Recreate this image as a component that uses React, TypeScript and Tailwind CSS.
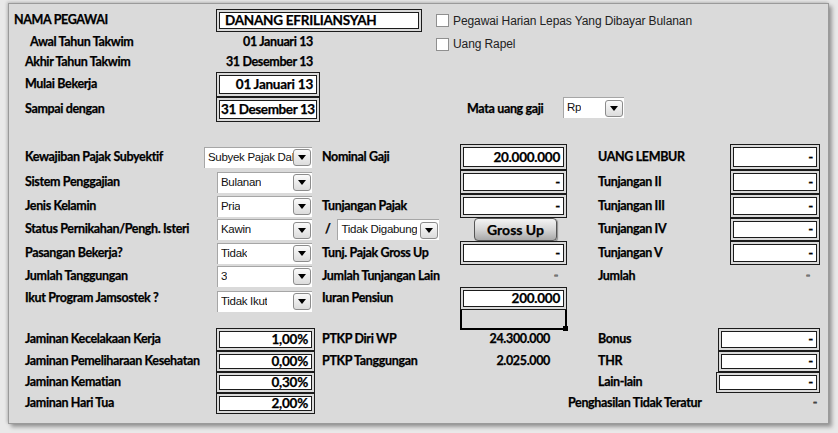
import React from 'react';

// Excel-style form: gaji / pajak pegawai

const Box: React.FC<{ w: number; h?: number; children?: React.ReactNode; left?: boolean }> = ({ w, h, children, left }) => (
  <div
    className={`flex h-full shrink-0 items-center overflow-hidden border-[4px] border-double border-[#1b1b1b] bg-white bg-clip-padding text-[13.5px] ${left ? 'justify-start px-[1px] tracking-[-0.4px]' : 'justify-end px-[3px] tracking-[-0.25px]'}`}
    style={{ width: w, height: h }}
  >
    {children}
  </div>
);

const Arrow: React.FC = () => (
  <div className="flex h-[17px] w-[18px] shrink-0 items-center justify-center rounded-[3px] border border-[#8c8c8c] bg-gradient-to-b from-[#fbfbfb] to-[#dcdcdc]">
    <div className="h-0 w-0 border-x-[4px] border-t-[5px] border-x-transparent border-t-black" />
  </div>
);

const Dropdown: React.FC<{ w: number; text: string; ml?: string }> = ({ w, text, ml = '' }) => (
  <div
    className={`flex h-[21px] shrink-0 items-center justify-between border-l border-t border-[#a6a6a6] bg-white pl-[3px] pr-[1px] ${ml}`}
    style={{ width: w }}
  >
    <span className="min-w-0 overflow-hidden font-['Liberation_Sans',sans-serif] text-[11.5px] font-normal tracking-[-0.3px] text-[#111] [-webkit-text-stroke:0px]">{text}</span>
    <Arrow />
  </div>
);

const Check: React.FC<{ label: string }> = ({ label }) => (
  <div className="flex items-center gap-[4px]">
    <div className="h-[13px] w-[13px] border border-[#8f8f8f] bg-white" />
    <span className="font-['Liberation_Sans',sans-serif] text-[12px] font-normal tracking-[-0.1px] text-[#222] [-webkit-text-stroke:0px]">{label}</span>
  </div>
);

type MidRow = {
  h: number;
  label: string;
  c2?: React.ReactNode;
  c3?: React.ReactNode;
  c4?: React.ReactNode;
  c5?: string;
  c6?: React.ReactNode;
};

export default function App() {
  const mid: MidRow[] = [
    { h: 26, label: 'Kewajiban Pajak Subyektif', c2: <Dropdown w={108} text="Subyek Pajak Dalam Negeri" ml="-ml-[12px]" />, c3: 'Nominal Gaji', c4: <Box w={107}>20.000.000</Box>, c5: 'UANG LEMBUR', c6: <Box w={90}>-</Box> },
    { h: 24, label: 'Sistem Penggajian', c2: <Dropdown w={95} text="Bulanan" ml="ml-[1px]" />, c4: <Box w={107}>-</Box>, c5: 'Tunjangan II', c6: <Box w={90}>-</Box> },
    { h: 24, label: 'Jenis Kelamin', c2: <Dropdown w={95} text="Pria" ml="ml-[1px]" />, c3: 'Tunjangan Pajak', c4: <Box w={107}>-</Box>, c5: 'Tunjangan III', c6: <Box w={90}>-</Box> },
    {
      h: 23,
      label: 'Status Pernikahan/Pengh. Isteri',
      c2: <Dropdown w={95} text="Kawin" ml="ml-[1px]" />,
      c3: (
        <div className="flex items-center">
          <span className="ml-[3px] mr-[7px]">/</span>
          <Dropdown w={102} text="Tidak Digabung" />
        </div>
      ),
      c4: (
        <div className="ml-[14px] flex h-[23px] w-[83px] items-center justify-center rounded-[4px] border border-[#555] bg-gradient-to-b from-[#f4f4f4] via-[#d6d6d6] to-[#a9a9a9] text-[14px] tracking-normal shadow-[1px_1px_1px_rgba(0,0,0,0.35)]">
          Gross Up
        </div>
      ),
      c5: 'Tunjangan IV',
      c6: <Box w={90}>-</Box>,
    },
    { h: 24, label: 'Pasangan Bekerja?', c2: <Dropdown w={95} text="Tidak" ml="ml-[1px]" />, c3: 'Tunj. Pajak Gross Up', c4: <Box w={107}>-</Box>, c5: 'Tunjangan V', c6: <Box w={90}>-</Box> },
    { h: 22, label: 'Jumlah Tanggungan', c2: <Dropdown w={95} text="3" ml="ml-[1px]" />, c3: 'Jumlah Tunjangan Lain', c4: <div className="w-full pr-[9px] text-right text-[#777]">-</div>, c5: 'Jumlah', c6: <div className="w-full pr-[10px] text-right text-[#777]">-</div> },
    { h: 23, label: 'Ikut Program Jamsostek ?', c2: <Dropdown w={95} text="Tidak Ikut" ml="ml-[1px] mt-[5px]" />, c3: 'Iuran Pensiun', c4: <Box w={107}>200.000</Box> },
  ];

  const bottom = [
    { h: 23, label: 'Jaminan Kecelakaan Kerja', pct: '1,00%', c3: 'PTKP Diri WP', c4: '24.300.000', c5: 'Bonus', box: 102 },
    { h: 21, label: 'Jaminan Pemeliharaan Kesehatan', pct: '0,00%', c3: 'PTKP Tanggungan', c4: '2.025.000', c5: 'THR', box: 102 },
    { h: 21, label: 'Jaminan Kematian', pct: '0,30%', c3: '', c4: '', c5: 'Lain-lain', box: 104 },
    { h: 21, label: 'Jaminan Hari Tua', pct: '2,00%', c3: '', c4: '', c5: '', box: 0 },
  ];

  return (
    <div className="h-[433px] w-[838px] overflow-hidden whitespace-nowrap bg-[#e9e9e9] pl-[8px] pt-[3px] font-['Lato',sans-serif] text-[12.5px] font-bold tracking-[-0.35px] text-black [-webkit-text-stroke:0.25px_black]">
      <div className="h-[421px] w-[821px] border border-[#9a9a9a] bg-[#dadada] pt-[5px] shadow-[3px_3px_4px_rgba(0,0,0,0.35),-1px_-1px_3px_rgba(0,0,0,0.2)]">
        {/* top block */}
        <div className="flex h-[23px] items-center">
          <div className="w-[207px] pl-[5px]">NAMA PEGAWAI</div>
          <Box w={206} left>
            <span className="pl-[4px] tracking-[-0.25px]">DANANG EFRILIANSYAH</span>
          </Box>
          <div className="ml-[14px]">
            <Check label="Pegawai Harian Lepas Yang Dibayar Bulanan" />
          </div>
        </div>
        <div className="flex h-[20px] items-center">
          <div className="w-[207px] pl-[21px]">Awal Tahun Takwim</div>
          <div className="w-[106px] pr-[9px] text-right">01 Januari 13</div>
          <div className="ml-[114px] mt-[4px]">
            <Check label="Uang Rapel" />
          </div>
        </div>
        <div className="flex h-[20px] items-center">
          <div className="w-[207px] pl-[16px]">Akhir Tahun Takwim</div>
          <div className="w-[106px] pr-[9px] text-right">31 Desember 13</div>
        </div>
        <div className="flex h-[25px] items-center">
          <div className="w-[207px] pl-[16px]">Mulai Bekerja</div>
          <Box w={104}>01 Januari 13</Box>
        </div>
        <div className="flex h-[25px] items-center">
          <div className="w-[207px] pl-[16px]">Sampai dengan</div>
          <Box w={104} left>31 Desember 13</Box>
          <div className="ml-[147px] w-[96px]">Mata uang gaji</div>
          <Dropdown w={61} text="Rp" ml="-mt-[4px]" />
        </div>

        <div className="h-[22px]" />

        {/* middle block */}
        {mid.map((r) => (
          <div key={r.label} className="flex items-center" style={{ height: r.h }}>
            <div className="w-[207px] shrink-0 pl-[16px]">{r.label}</div>
            <div className="flex h-full w-[106px] shrink-0 items-center">{r.c2}</div>
            <div className="flex h-full w-[138px] shrink-0 items-center">{r.c3}</div>
            <div className="flex h-full w-[107px] shrink-0 items-center">{r.c4}</div>
            <div className="w-[163px] shrink-0 pl-[31px]">{r.c5}</div>
            <div className="flex h-full w-[90px] shrink-0 items-center">{r.c6}</div>
          </div>
        ))}
        <div className="flex h-[18px]">
          <div className="w-[451px]" />
          <div className="relative h-[20px] w-[107px] border-x-2 border-b-2 border-black">
            <div className="absolute -bottom-[3px] -right-[3px] h-[5px] w-[5px] bg-black" />
          </div>
        </div>

        {/* bottom block */}
        {bottom.map((r, i) => (
          <div key={r.label} className="flex items-center" style={{ height: r.h }}>
            <div className="w-[207px] shrink-0 pl-[16px]">{r.label}</div>
            <div className="flex h-full w-[106px] shrink-0 items-center">
              <Box w={99}>{r.pct}</Box>
            </div>
            <div className="w-[138px] shrink-0">{r.c3}</div>
            <div className="w-[107px] shrink-0 pr-[17px] text-right">{r.c4}</div>
            {i < 3 ? (
              <>
                <div className="shrink-0 pl-[31px]" style={{ width: 709 - 558 + (102 - r.box) }}>{r.c5}</div>
                <div className="flex h-full items-center">
                  <Box w={r.box}>-</Box>
                </div>
              </>
            ) : (
              <>
                <div className="w-[200px] shrink-0 pl-[1px]">Penghasilan Tidak Teratur</div>
                <div className="w-[51px] shrink-0 pr-[1px] text-right text-[#444]">-</div>
              </>
            )}
          </div>
        ))}
      </div>
    </div>
  );
}
